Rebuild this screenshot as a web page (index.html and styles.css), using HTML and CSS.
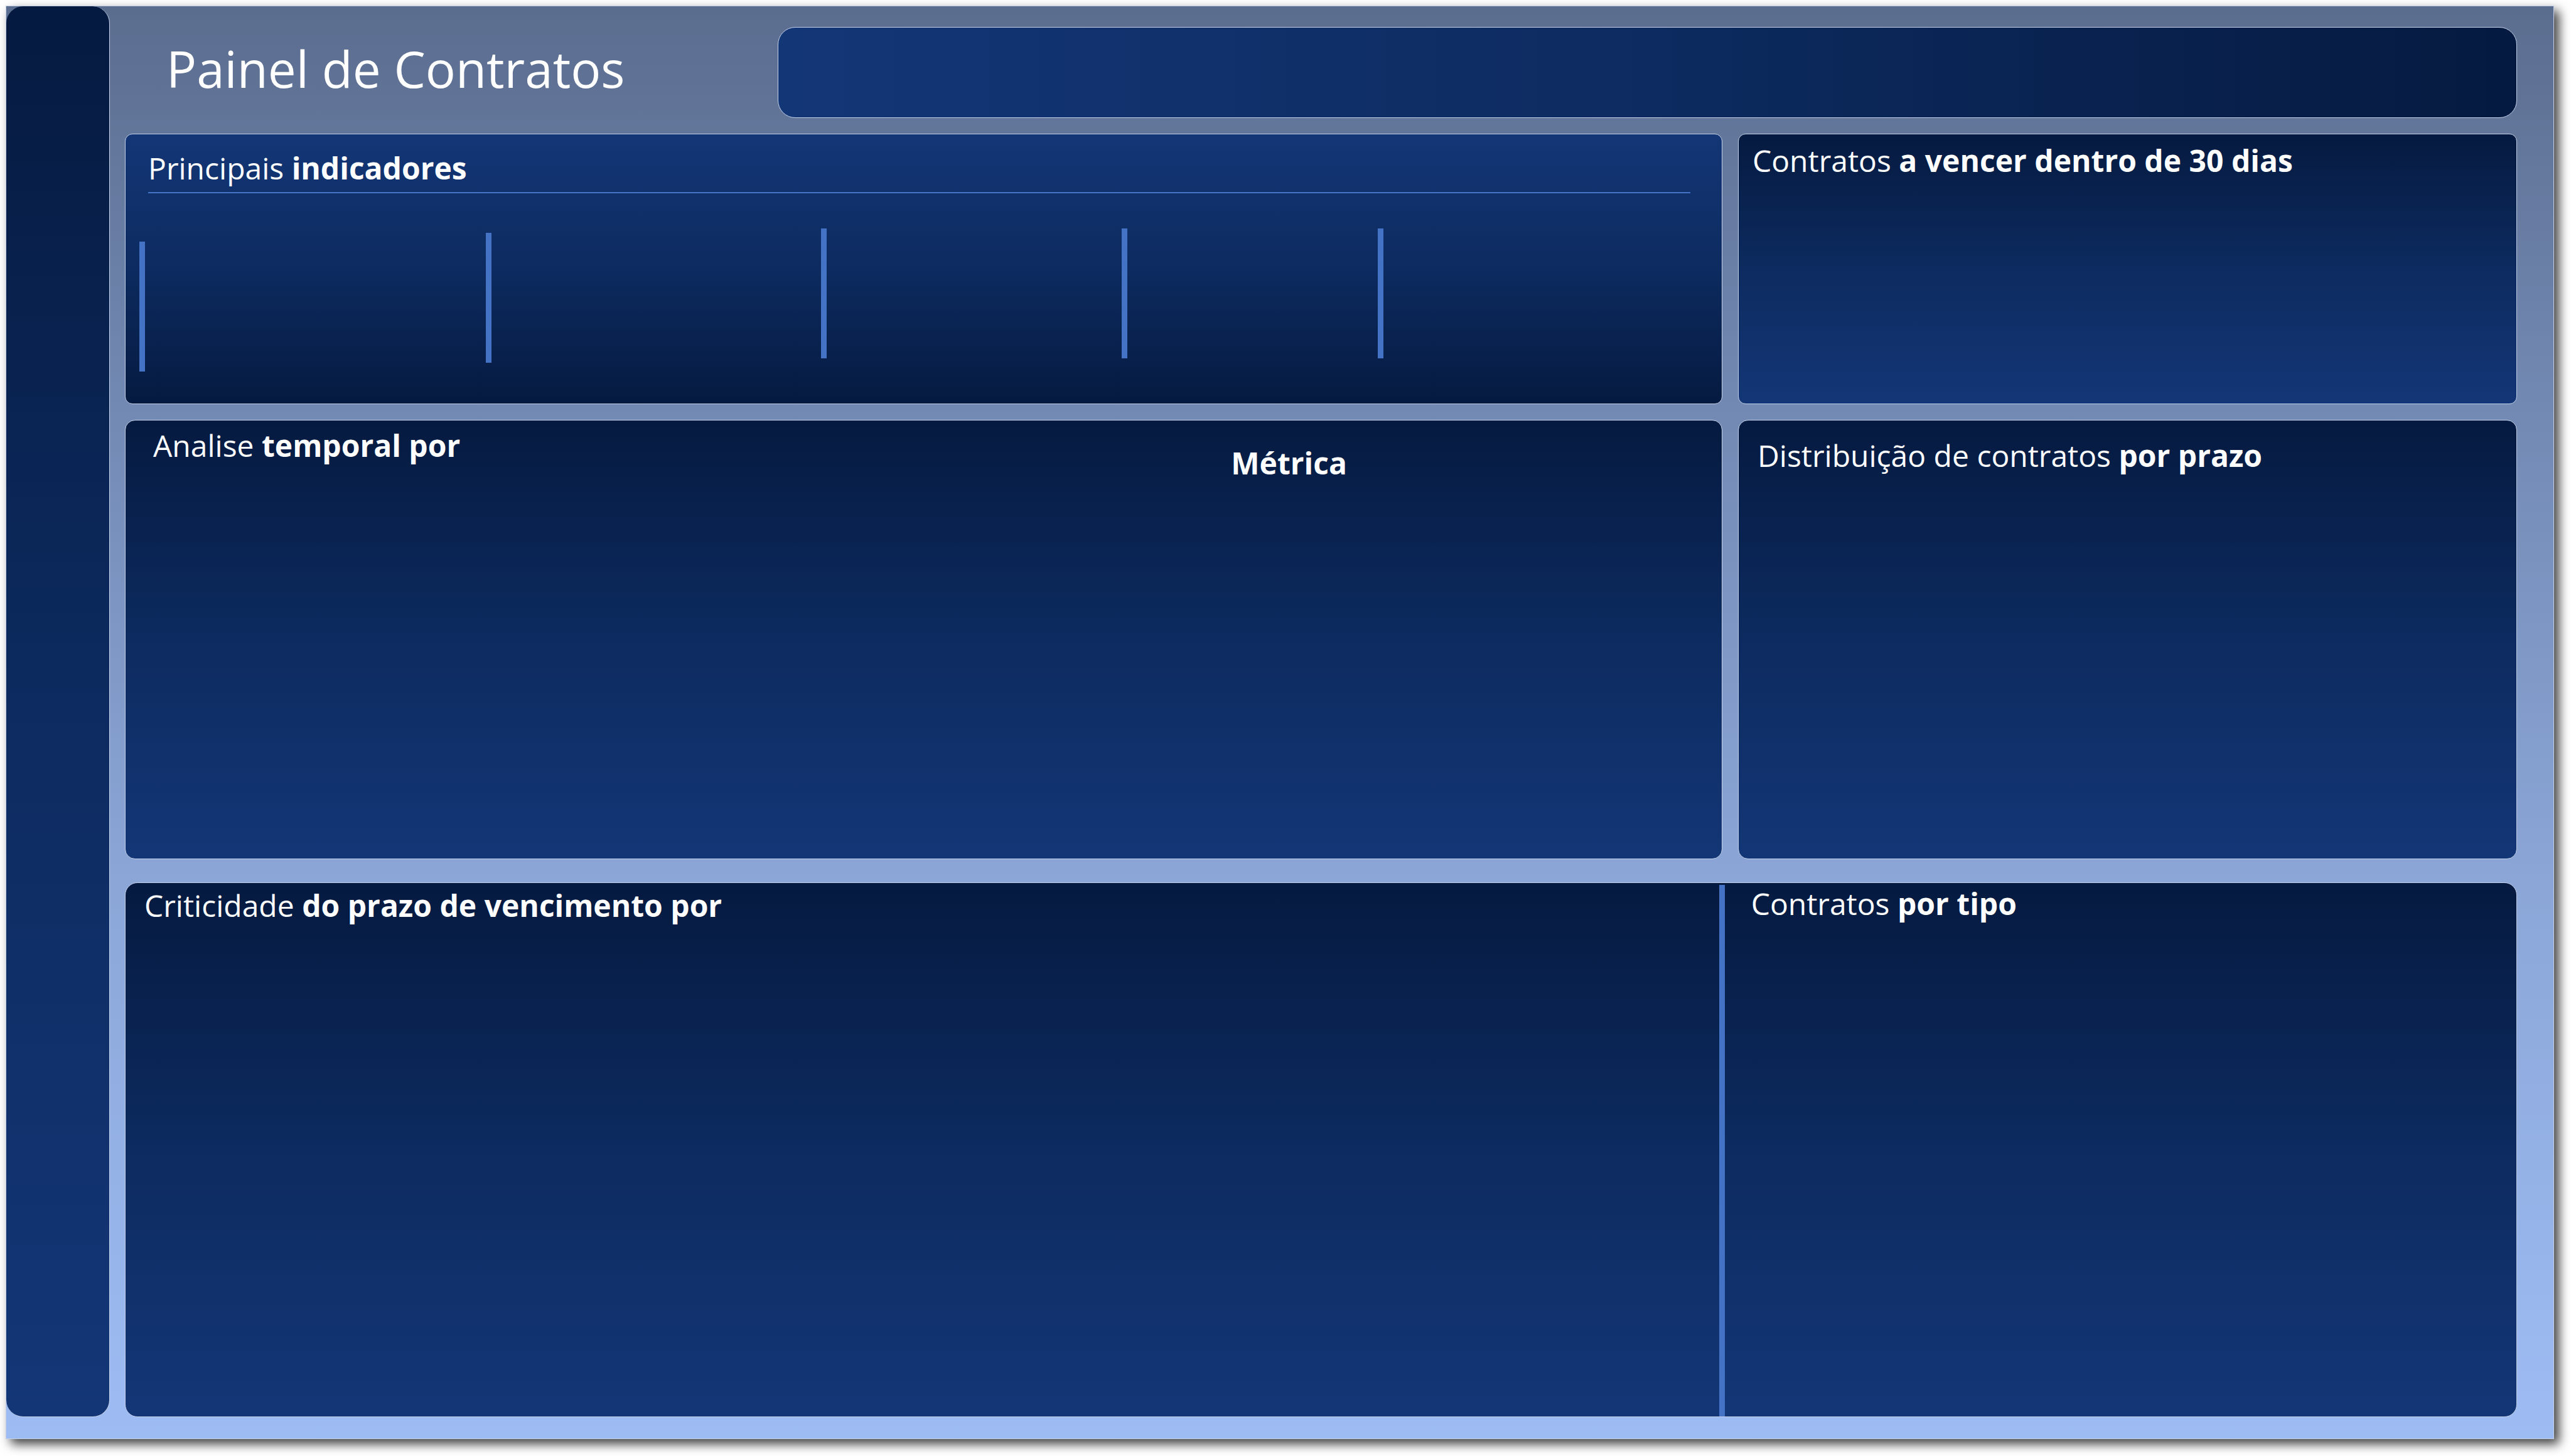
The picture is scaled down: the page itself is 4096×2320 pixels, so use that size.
FILE: index.html
```html
<!DOCTYPE html>
<html lang="pt-BR">
<head>
<meta charset="utf-8">
<meta name="viewport" content="width=device-width, initial-scale=1">
<title>Painel de Contratos</title>
<link rel="stylesheet" href="styles.css">
</head>
<body>
<div class="slide">
  <aside class="sidebar"></aside>
  <main class="board">
    <header class="topbar">
      <h1 class="page-title">Painel de Contratos</h1>
      <div class="filter-bar"></div>
    </header>
    <div class="row">
      <section class="panel panel-kpi">
        <h2 class="panel-title">Principais <b>indicadores</b></h2>
        <div class="kpis">
          <div class="kpi kpi-lower"></div>
          <div class="kpi kpi-low"></div>
          <div class="kpi"></div>
          <div class="kpi"></div>
          <div class="kpi"></div>
        </div>
      </section>
      <section class="panel panel-due">
        <h2 class="panel-title">Contratos <b>a vencer dentro de 30 dias</b></h2>
      </section>
    </div>
    <div class="row">
      <section class="panel panel-time">
        <h2 class="panel-title">Analise <b>temporal por</b></h2>
        <h2 class="panel-title metric"><b>Métrica</b></h2>
      </section>
      <section class="panel panel-term">
        <h2 class="panel-title">Distribuição de contratos <b>por prazo</b></h2>
      </section>
    </div>
    <div class="panel panel-bottom">
      <section class="critical">
        <h2 class="panel-title">Criticidade <b>do prazo de vencimento por</b></h2>
      </section>
      <section class="by-type">
        <h2 class="panel-title">Contratos <b>por tipo</b></h2>
      </section>
    </div>
  </main>
</div>
</body>
</html>
```
FILE: styles.css
```css
:root {
  --navy-dark: #051a40;
  --navy-mid: #0d2b60;
  --navy: #133676;
  --accent: #4472c4;
  --edge: #c3d0e8;
}

* {
  box-sizing: border-box;
}

body {
  margin: 0;
  padding: 9px 27px 27px 9px;
  background: #fff;
  color: #fff;
  font-family: "Open Sans", "Noto Sans", sans-serif;
}

.slide {
  display: grid;
  grid-template-columns: 165px 1fr;
  min-height: calc(100vh - 36px);
  border: 1px solid var(--edge);
  background: linear-gradient(#5b6d8f, #7289b3 28%, #8aa5d6 60%, #9ebcf4);
  box-shadow: 8px 8px 16px rgba(0, 0, 0, 0.75);
}

.sidebar {
  margin-bottom: 34px;
  border: 1px solid var(--edge);
  border-left: 0;
  border-top: 0;
  border-radius: 27px;
  background: linear-gradient(var(--navy-dark), var(--navy-mid) 50%, var(--navy));
}

.board {
  display: grid;
  grid-template-rows: 145px 456fr 725fr 889fr;
  padding: 33px 58px 34px 24px;
}

.topbar {
  display: grid;
  grid-template-columns: 1040fr 2772fr;
}

.page-title {
  margin: 0;
  padding: 0 0 0 66px;
  font-size: 80px;
  font-weight: 400;
  line-height: 132px;
  white-space: nowrap;
}

.filter-bar {
  border: 1px solid var(--edge);
  border-radius: 28px;
  background: linear-gradient(90deg, var(--navy), var(--navy-mid) 50%, var(--navy-dark));
}

.row {
  display: grid;
  grid-template-columns: 2545fr 1241fr;
  column-gap: 25px;
  padding-top: 25px;
}

.panel {
  border: 1px solid var(--edge);
  border-radius: 16px;
  background: linear-gradient(var(--navy-dark), var(--navy-mid) 50%, var(--navy));
}

.panel-title {
  margin: 0;
  font-size: 48px;
  font-weight: 400;
  line-height: 60px;
  white-space: nowrap;
}

.panel-title b {
  font-weight: 700;
}

.panel-kpi {
  display: flex;
  flex-direction: column;
  padding: 24px 50px 48px 22px;
  border-radius: 12px;
  background: linear-gradient(var(--navy), var(--navy-mid) 50%, var(--navy-dark));
}

.panel-kpi .panel-title {
  margin-left: 14px;
  padding-bottom: 8px;
  border-bottom: 2px solid var(--accent);
}

.kpis {
  flex: 1;
  display: grid;
  grid-template-columns: 552fr 534fr 480fr 408fr 498fr;
  padding-top: 56px;
}

.kpi {
  height: 207px;
  border-left: 9px solid var(--accent);
}

.kpi-low {
  margin-top: 7px;
}

.kpi-lower {
  margin-top: 21px;
}

.panel-due {
  padding: 12px 22px;
  border-radius: 12px;
}

.panel-time {
  display: grid;
  grid-template-columns: 1762fr 782fr;
  padding-top: 10px;
}

.panel-time .panel-title {
  padding-left: 44px;
}

.panel-time .metric {
  padding: 28px 0 0;
}

.panel-term {
  padding: 26px 30px;
}

.panel-bottom {
  display: grid;
  grid-template-columns: 2538fr 1270fr;
  margin-top: 37px;
  border-radius: 20px;
}

.critical {
  padding: 6px 30px;
}

.by-type {
  margin-top: 3px;
  border-left: 9px solid var(--accent);
  padding: 0 42px;
}
```
